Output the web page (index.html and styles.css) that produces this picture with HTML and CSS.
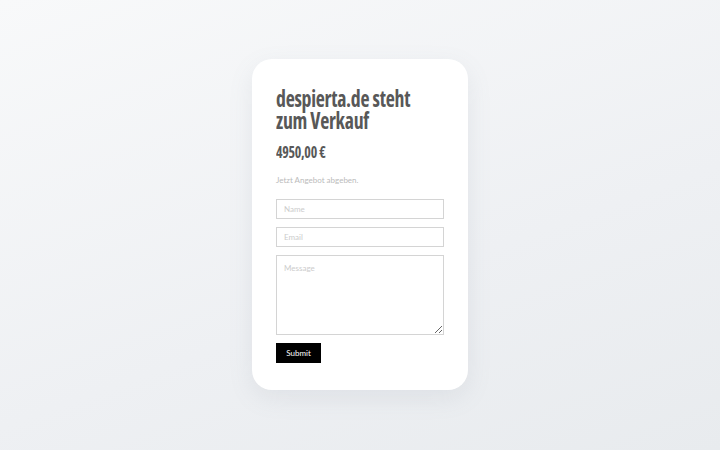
FILE: index.html
```html
<!DOCTYPE html>
<html lang="de">
<head>
<meta charset="utf-8">
<link rel="stylesheet" href="styles.css">
</head>
<body>
<main class="page">
  <section class="card">
    <h1 class="title">despierta.de steht zum Verkauf</h1>
    <p class="price">4950,00 €</p>
    <p class="lead">Jetzt Angebot abgeben.</p>
    <form class="form">
      <input class="field" type="text" placeholder="Name">
      <input class="field" type="email" placeholder="Email">
      <textarea class="field area" placeholder="Message"></textarea>
      <button class="submit" type="button">Submit</button>
    </form>
  </section>
</main>
</body>
</html>
```
FILE: styles.css
```css
html, body {
  margin: 0;
  padding: 0;
  height: 100%;
}
body {
  background: linear-gradient(160deg, #f8f9fa 0%, #eef0f3 60%, #e8ebee 100%);
  font-family: Lato, "Liberation Sans", sans-serif;
}
.page {
  height: 100%;
  display: flex;
  justify-content: center;
  align-items: flex-start;
  padding-top: 59px;
  box-sizing: border-box;
}
.card {
  width: 216px;
  height: 331px;
  box-sizing: border-box;
  background: #fff;
  border-radius: 20px;
  padding: 28px 24px 24px;
  box-shadow: 0 8px 24px rgba(120, 130, 150, 0.12);
}
.title {
  margin: 0;
  width: 192px;
  font-family: "Open Sans", sans-serif;
  font-stretch: 75%;
  font-weight: 700;
  font-size: 23px;
  line-height: 22px;
  color: #585858;
  letter-spacing: -0.3px;
  transform: scaleX(0.86);
  transform-origin: left center;
}
.price {
  margin: 11px 0 0;
  font-family: "Open Sans", sans-serif;
  font-stretch: 75%;
  font-weight: 700;
  font-size: 16px;
  line-height: 20px;
  color: #585858;
  letter-spacing: -0.3px;
  transform: scaleX(0.87);
  transform-origin: left center;
}
.lead {
  margin: 12px 0 0;
  font-size: 8px;
  line-height: 12px;
  color: #bbb;
}
.form {
  margin-top: 13px;
  display: flex;
  flex-direction: column;
  align-items: flex-start;
  gap: 8px;
}
.field {
  width: 168px;
  height: 20px;
  box-sizing: border-box;
  border: 1px solid #d4d4d4;
  border-radius: 0;
  padding: 0 7px;
  margin: 0;
  font-family: Lato, sans-serif;
  font-size: 8px;
  color: #555;
  background: #fff;
}
.field::placeholder {
  color: #ccc;
}
.area {
  height: 80px;
  padding: 7px;
  resize: vertical;
}
.submit {
  width: 45px;
  height: 20px;
  border: 0;
  border-radius: 0;
  background: #000;
  color: #fff;
  font-family: Lato, sans-serif;
  font-size: 8px;
  padding: 0;
}
```
